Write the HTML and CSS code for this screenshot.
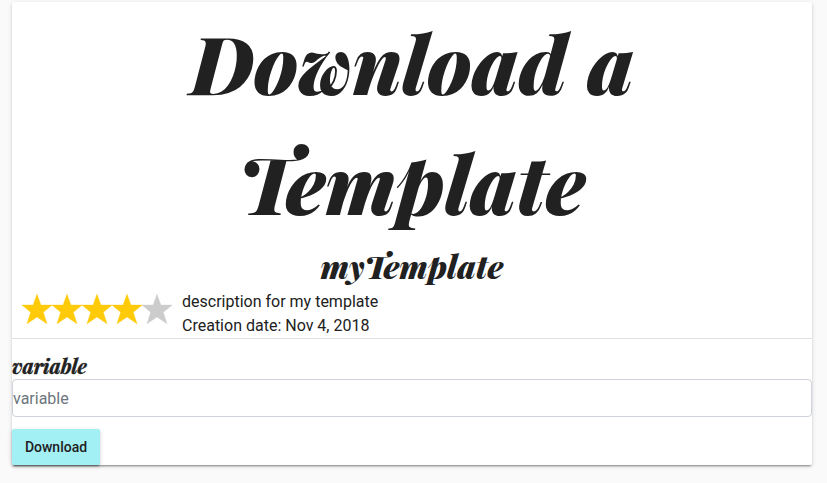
FILE: index.html
```
<!DOCTYPE html>
<html lang="en">
<head>
<meta charset="utf-8">
<title>Download a Template</title>
<link rel="stylesheet" href="styles.css">
</head>
<body>
<main class="card">
  <h1 class="title">Download a<br>Template</h1>
  <h2 class="name">myTemplate</h2>
  <section class="summary">
    <svg class="stars" width="150" height="30" viewBox="0 0 150 30" role="img" aria-label="4 out of 5 stars">
      <defs><path id="star" d="M15 .2 18.9 11.1H30.2L21.3 18.2 25 29.8 15 23 5 29.8 8.7 18.2 0 11.1H11.1Z"/></defs>
      <g fill="#ffca08" stroke="#ffca08" stroke-width=".4"><use href="#star"/><use href="#star" x="30"/><use href="#star" x="60"/><use href="#star" x="90"/></g>
      <use href="#star" x="120" fill="#ccc" stroke="#ccc" stroke-width=".4"/>
    </svg>
    <div class="details"><div class="description">description for my template</div><div class="date">Creation date: Nov 4, 2018</div></div>
  </section>
  <form class="form">
    <label class="label" for="variable">variable</label>
    <input class="input" id="variable" placeholder="variable">
    <button class="button" type="button">Download</button>
  </form>
</main>
</body>
</html>
```
FILE: styles.css
```
* { box-sizing: border-box; }
body { min-height: 483px; margin: 0; padding: 2px 15px 0 12px; background: #fafafa; color: #212121; font-family: Roboto, sans-serif; font-size: 16px; line-height: 24px; }
.card { height: 463px; background: #fff; border-radius: 2px; box-shadow: 0 3px 1px -2px rgba(0,0,0,.2), 0 2px 2px 0 rgba(0,0,0,.14), 0 1px 5px 0 rgba(0,0,0,.12); }
.title, .name, .label { margin: 0; font-family: "Playfair Display", "Liberation Serif", serif; font-style: italic; font-weight: 900; }
.title { height: 240px; font-size: 80px; line-height: 120px; text-align: center; }
.name { height: 47px; font-size: 32px; line-height: 48px; text-align: center; }
.summary { display: flex; height: 50px; padding-left: 10px; border-bottom: 1px solid #dee2e6; }
.stars { flex: none; margin: 5px 10px 0 0; overflow: visible; }
.details { padding-top: 1px; }
.form { padding-top: 15px; }
.label { display: block; height: 25px; font-size: 20px; font-weight: 700; line-height: 24px; -webkit-text-stroke: .4px #212121; }
.input { display: block; width: 100%; height: 38px; padding: 0; border: 1px solid #ced4da; border-radius: 4px; background: #fff; font: 16px/24px Roboto, sans-serif; color: #495057; }
.input::placeholder { color: #6c757d; opacity: 1; }
.button { display: block; width: 88px; height: 36px; margin-top: 12px; padding: 0; border: 0; border-radius: 2px; background: #a2eff4; color: #212121; font: 500 14px/36px Roboto, sans-serif; box-shadow: 0 3px 1px -2px rgba(0,0,0,.2), 0 2px 2px 0 rgba(0,0,0,.14), 0 1px 5px 0 rgba(0,0,0,.12); }
```
